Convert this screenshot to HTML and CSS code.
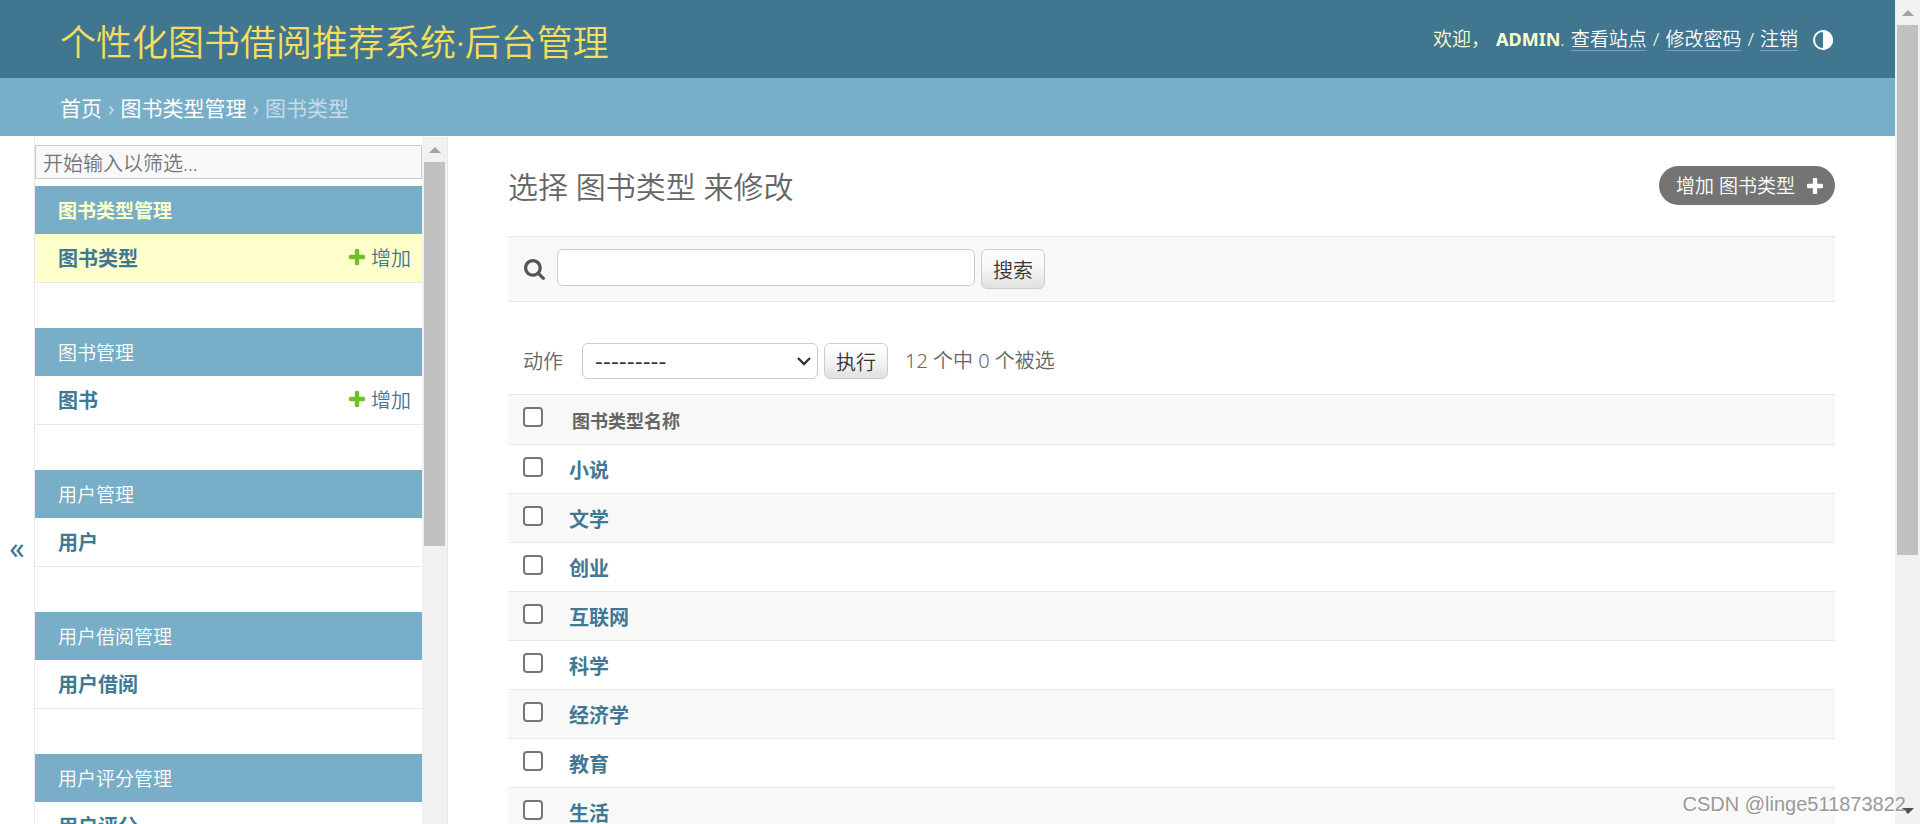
FILE: index.html
```html
<!DOCTYPE html>
<html lang="zh-CN">
<head>
<meta charset="utf-8">
<title>选择 图书类型 来修改</title>
<link rel="stylesheet" href="styles.css">
</head>
<body>
<svg class="defs" aria-hidden="true">
  <symbol id="plus" viewBox="192 188 1408 1408"><path d="M1600 796v192q0 40-28 68t-68 28h-416v416q0 40-28 68t-68 28h-192q-40 0-68-28t-28-68v-416h-416q-40 0-68-28t-28-68v-192q0-40 28-68t68-28h416v-416q0-40 28-68t68-28h192q40 0 68 28t28 68v416h416q40 0 68 28t28 68z"/></symbol>
</svg>
<div class="window">
  <div class="page">
    <header class="header">
      <a class="site-name" href="#">个性化图书借阅推荐系统·后台管理</a>
      <div class="user-tools">
        <span>欢迎，</span>
        <span class="user"><strong>ADMIN</strong>.</span>
        <a href="#">查看站点</a><span>/</span><a href="#">修改密码</a><span>/</span><a href="#">注销</a>
        <button class="theme" type="button" aria-label="切换主题">
          <svg viewBox="0 0 20 20" width="20" height="20"><circle cx="10" cy="10" r="9" fill="none" stroke="#fff" stroke-width="2"/><path d="M10 0a10 10 0 0 1 0 20z" fill="#fff"/></svg>
        </button>
      </div>
    </header>
    <nav class="breadcrumbs"><a href="#">首页</a><span>›</span><a href="#">图书类型管理</a><span>›</span><span>图书类型</span></nav>
    <div class="main">
      <button class="toggle" type="button" aria-label="切换导航">«</button>
      <aside class="sidebar">
        <div class="sidebar-body">
          <input class="filter" type="search" placeholder="开始输入以筛选..." aria-label="筛选导航">
          <section class="module current">
            <h2><a href="#">图书类型管理</a></h2>
            <div class="model"><a class="name" href="#">图书类型</a><a class="add" href="#"><svg><use href="#plus"/></svg>增加</a></div>
          </section>
          <section class="module">
            <h2><a href="#">图书管理</a></h2>
            <div class="model"><a class="name" href="#">图书</a><a class="add" href="#"><svg><use href="#plus"/></svg>增加</a></div>
          </section>
          <section class="module">
            <h2><a href="#">用户管理</a></h2>
            <div class="model"><a class="name" href="#">用户</a></div>
          </section>
          <section class="module">
            <h2><a href="#">用户借阅管理</a></h2>
            <div class="model"><a class="name" href="#">用户借阅</a></div>
          </section>
          <section class="module">
            <h2><a href="#">用户评分管理</a></h2>
            <div class="model"><a class="name" href="#">用户评分</a></div>
          </section>
        </div>
        <div class="scrollbar">
          <span class="arrow-up"></span>
          <span class="thumb"></span>
        </div>
      </aside>
      <main class="content">
        <div class="title-row">
          <h1>选择 图书类型 来修改</h1>
          <a class="add-button" href="#">增加 图书类型<svg><use href="#plus"/></svg></a>
        </div>
        <form class="search">
          <label for="q"><svg viewBox="64 128 1664 1664" width="21" height="21" role="img" aria-label="搜索"><path fill="#555" d="M1216 832q0-185-131.500-316.500t-316.500-131.500-316.500 131.500-131.500 316.500 131.500 316.500 316.500 131.500 316.500-131.500 131.500-316.500zm512 832q0 52-38 90t-90 38q-54 0-90-38l-343-342q-179 124-399 124-143 0-273.500-55.500t-225-150-150-225-55.500-273.500 55.500-273.500 150-225 225-150 273.500-55.500 273.500 55.500 225 150 150 225 55.500 273.500q0 220-124 399l343 343q37 37 37 90z"/></svg></label>
          <input id="q" type="text">
          <button class="button" type="submit">搜索</button>
        </form>
        <form class="results">
          <div class="actions">
            <label for="action">动作</label>
            <span class="select">
              <select id="action"><option>---------</option></select>
              <svg viewBox="0 0 14 9" width="14" height="9"><path d="M1 1l6 6 6-6" fill="none" stroke="#333" stroke-width="2.400"/></svg>
            </span>
            <button class="button" type="submit">执行</button>
            <span class="counter">12 个中 0 个被选</span>
          </div>
          <table>
            <thead><tr><th class="check"><input type="checkbox" aria-label="全选"></th><th class="label">图书类型名称</th></tr></thead>
            <tbody>
              <tr><td class="check"><input type="checkbox" aria-label="小说"></td><th><a href="#">小说</a></th></tr>
              <tr><td class="check"><input type="checkbox" aria-label="文学"></td><th><a href="#">文学</a></th></tr>
              <tr><td class="check"><input type="checkbox" aria-label="创业"></td><th><a href="#">创业</a></th></tr>
              <tr><td class="check"><input type="checkbox" aria-label="互联网"></td><th><a href="#">互联网</a></th></tr>
              <tr><td class="check"><input type="checkbox" aria-label="科学"></td><th><a href="#">科学</a></th></tr>
              <tr><td class="check"><input type="checkbox" aria-label="经济学"></td><th><a href="#">经济学</a></th></tr>
              <tr><td class="check"><input type="checkbox" aria-label="教育"></td><th><a href="#">教育</a></th></tr>
              <tr><td class="check"><input type="checkbox" aria-label="生活"></td><th><a href="#">生活</a></th></tr>
            </tbody>
          </table>
        </form>
      </main>
    </div>
  </div>
  <div class="scrollbar page-scrollbar">
    <span class="arrow-up"></span>
    <span class="thumb"></span>
    <span class="arrow-down"></span>
  </div>
  <div class="watermark">CSDN @linge511873822</div>
</div>
</body>
</html>
```
FILE: styles.css
```css
* { box-sizing: border-box; }

body {
  margin: 0;
  overflow: hidden;
  background: #fff;
  color: #666;
  font: 20px/24px "Noto Sans", "Noto Sans CJK SC", sans-serif;
}

a { color: #417893; text-decoration: none; }
input, select, button { font: inherit; }
.defs { display: none; }

.window { display: flex; height: 100vh; position: relative; }
.page { flex: 1; min-width: 0; height: 100vh; overflow: hidden; }

/* Header */
.header {
  display: flex;
  align-items: center;
  justify-content: space-between;
  height: 78px;
  padding: 0 60px 6px;
  background: #417690;
  color: #ffc;
}
.site-name {
  padding-top: 14px;
  color: #f5dd5d;
  font-size: 36px;
  font-weight: 350;
  line-height: 42px;
}
.user-tools {
  display: flex;
  align-items: center;
  gap: 6px;
  padding-top: 6px;
  font-size: 19px;
  font-weight: 350;
}
.user { font-size: 18px; }
.user strong { font-weight: 700; }
.user-tools a { height: 24px; border-bottom: 1px solid #7a9fb1; color: #fff; }
.theme {
  display: flex;
  margin: 2px 2px 0 9px;
  padding: 0;
  border: 0;
  background: none;
}

.breadcrumbs {
  display: flex;
  gap: 6px;
  padding: 17px 60px 15px;
  background: #79aec8;
  color: #c4dce8;
  font-size: 21px;
  line-height: 26px;
}
.breadcrumbs a { color: #fff; }

/* Navigation */
.main { display: flex; }
.toggle {
  width: 34px;
  height: 100vh;
  padding: 0;
  border: 0;
  background: none;
  color: #417893;
  font-size: 30px;
}
.sidebar {
  display: flex;
  width: 414px;
  height: 100vh;
  border: 1px solid #e8e8e8;
  border-top: 0;
  padding-top: 1px;
}
.sidebar-body { flex: 1; padding-top: 8px; }
.filter {
  display: block;
  width: 100%;
  height: 34px;
  margin-bottom: 7px;
  padding: 2px 7px 0;
  border: 1px solid #ccc;
  background: #f8f8f8;
  font-weight: 350;
}
.filter::placeholder { color: #757575; }
.module { margin-bottom: 45px; }
.module h2 {
  margin: 0;
  padding: 13px 23px 11px;
  background: #79aec8;
  font-size: 19px;
  font-weight: 350;
}
.module h2 a { color: #fff; }
.model {
  display: flex;
  justify-content: space-between;
  padding: 13px 11px 11px 23px;
  border-bottom: 1px solid #e8e8e8;
}
.name { font-weight: 700; }
.add { display: flex; gap: 6px; font-weight: 350; }
.add svg { width: 16px; height: 16px; margin-top: 2px; fill: #70bf2b; }
.module.current h2 { font-weight: 700; }
.current h2 a { color: #ffc; }
.current .model { background: #ffc; }

.scrollbar {
  display: flex;
  flex-direction: column;
  align-items: center;
  width: 25px;
  background: #f1f1f1;
}
.arrow-up {
  height: 25px;
  padding-top: 10px;
}
.arrow-up::before {
  content: "";
  display: block;
  border: 6px solid transparent;
  border-top: 0;
  border-bottom-color: #a3a3a3;
}
.thumb { width: 21px; height: 384px; background: #c1c1c1; }
.page-scrollbar .thumb { height: 530px; }
.arrow-down {
  margin: auto 0 10px;
  border: 6px solid transparent;
  border-bottom: 0;
  border-top-color: #505050;
}

/* Change list */
.content { flex: 1; padding: 30px 60px; }
.title-row {
  display: flex;
  justify-content: space-between;
  align-items: flex-start;
  margin-bottom: 28px;
}
h1 { margin: 0; font-size: 30px; font-weight: 350; line-height: 42px; }
.add-button {
  display: flex;
  align-items: center;
  gap: 12px;
  padding: 8px 12px 7px 17px;
  border-radius: 20px;
  background: #747474;
  color: #fff;
  font-size: 19px;
  font-weight: 350;
}
.add-button svg { width: 16px; height: 16px; fill: #fff; }

.search {
  display: flex;
  align-items: flex-start;
  height: 66px;
  margin-bottom: 41px;
  padding: 12px 15px;
  border: solid #e8e8e8;
  border-width: 1px 0;
  background: #f8f8f8;
}
.search label { display: flex; margin: 10px 12px 0 1px; }
.search input {
  width: 418px;
  height: 37px;
  margin-right: 6px;
  border: 1px solid #ccc;
  border-radius: 6px;
  background: #fff;
}
.button {
  height: 36px;
  padding: 4px 11px 0;
  border: 1px solid #ccc;
  border-radius: 6px;
  background: linear-gradient(#fff, #f5f5f5 50%, #e0e0e0);
  color: #333;
  font-weight: 350;
  line-height: 24px;
}
.search .button { height: 40px; }

.actions {
  display: flex;
  align-items: center;
  margin-bottom: 15px;
  padding: 0 15px;
  font-weight: 350;
}
.actions label { padding-top: 2px; }
.select { position: relative; margin: 0 6px 0 19px; }
.select select {
  display: block;
  width: 236px;
  height: 36px;
  padding: 2px 12px 0;
  appearance: none;
  border: 1px solid #ccc;
  border-radius: 6px;
  background: #fff;
  color: #333;
  font: 22px/24px "DejaVu Sans", sans-serif;
}
.select svg { position: absolute; top: 14px; right: 7px; }
.counter { margin-left: 17px; }

table { width: 100%; border-collapse: collapse; }
th, td {
  height: 49px;
  padding: 14px 11px 0;
  border-bottom: 1px solid #e8e8e8;
  text-align: left;
  vertical-align: top;
}
thead th { height: 50px; border-top: 1px solid #e8e8e8; background: #f8f8f8; }
tbody tr:nth-child(even) { background: #f8f8f8; }
th.label { padding: 14px; font-size: 18px; padding-bottom: 0; }
th.check, td.check { width: 50px; padding: 12px 15px 0; }
.check input {
  display: block;
  width: 20px;
  height: 20px;
  margin: 0;
  appearance: none;
  border: 2px solid #767676;
  border-radius: 4px;
  background: #fff;
}

.watermark {
  position: absolute;
  right: 14px;
  bottom: 8px;
  color: #999;
  font: 20px/24px "Liberation Sans", sans-serif;
  text-shadow: 1px 1px 1px #fff;
}
```
